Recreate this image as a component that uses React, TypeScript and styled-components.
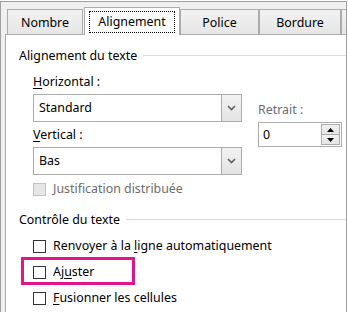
import React from "react";
import styled, { createGlobalStyle } from "styled-components";

const Global = createGlobalStyle`
  html, body { margin: 0; padding: 0; background: #ffffff; }
  body { font-family: "Noto Sans", "Open Sans", sans-serif; font-size: 12.4px; color: #000; }
  * { box-sizing: border-box; }
`;

const Frame = styled.div`
  margin-top: 1px;
  width: 347px;
  height: 311px;
  border: 1px solid #a0a0a0;
  border-bottom: none;
  background: #f0f0f0;
  display: flex;
  flex-direction: column;
  overflow: hidden;
`;

const TabStrip = styled.div`
  height: 32px;
  padding-left: 6px;
  display: flex;
  align-items: flex-end;
  flex-shrink: 0;
`;

const Tab = styled.div<{ $w: number; $active?: boolean; $gap?: number }>`
  flex-shrink: 0;
  width: ${(p) => p.$w}px;
  margin-left: ${(p) => p.$gap ?? 0}px;
  height: ${(p) => (p.$active ? 28 : 25)}px;
  margin-bottom: ${(p) => (p.$active ? -1 : 0)}px;
  position: relative;
  z-index: ${(p) => (p.$active ? 2 : 0)};
  border: 1px solid #acacac;
  border-bottom: none;
  background: ${(p) => (p.$active ? "#ffffff" : "linear-gradient(#f2f2f2, #e6e6e6)")};
  display: flex;
  justify-content: center;
  align-items: ${(p) => (p.$active ? "flex-start" : "center")};
  padding-top: ${(p) => (p.$active ? 3 : 2)}px;
  line-height: 16px;
  white-space: nowrap;
`;

const Focus = styled.div`
  width: 86px;
  height: 22px;
  border: 1px dotted #000;
  display: flex;
  align-items: center;
  justify-content: center;
  padding-bottom: 1px;
`;

const Panel = styled.div`
  flex: 1;
  background: #fff;
  border-top: 1px solid #acacac;
  border-left: 1px solid #acacac;
  margin-left: 4px;
  padding: 13px 0 0 13px;
  display: flex;
  flex-direction: column;
  position: relative;
  z-index: 1;
`;

const GroupHeader = styled.div<{ $mt: number }>`
  margin-top: ${(p) => p.$mt}px;
  height: 16px;
  line-height: 16px;
  display: flex;
  align-items: center;
  gap: 6px;
  white-space: nowrap;
  &::after {
    content: "";
    flex: 1;
    height: 1px;
    background: #dcdcdc;
    margin-top: -2px;
  }
`;

const GroupBody = styled.div`
  padding-left: 14px;
  display: flex;
  flex-direction: column;
`;

const TopGrid = styled.div`
  margin-top: 10px;
  display: grid;
  grid-template-columns: 209px 84px;
  column-gap: 16px;
`;

const Column = styled.div`
  display: flex;
  flex-direction: column;
`;

const Label = styled.div<{ $mt?: number; $disabled?: boolean }>`
  margin-top: ${(p) => p.$mt ?? 0}px;
  height: 16px;
  line-height: 16px;
  color: ${(p) => (p.$disabled ? "#6d6d6d" : "#000")};
  white-space: nowrap;
`;

const U = styled.span`
  text-decoration: underline;
  text-underline-offset: 2px;
`;

const Combo = styled.div<{ $mt: number }>`
  margin-top: ${(p) => p.$mt}px;
  height: 28px;
  border: 1px solid #acacac;
  display: flex;
  background: #fff;
`;

const ComboText = styled.div`
  flex: 1;
  padding-left: 5px;
  display: flex;
  align-items: center;
  line-height: 16px;
`;

const ComboButton = styled.div`
  width: 20px;
  border-left: 1px solid #acacac;
  background: linear-gradient(#f2f2f2, #e4e4e4);
  display: flex;
  align-items: center;
  justify-content: center;
`;

const Spin = styled.div`
  margin-top: 4px;
  height: 25px;
  border: 1px solid #acacac;
  display: flex;
  background: #fff;
`;

const SpinText = styled.div`
  flex: 1;
  padding-left: 4px;
  display: flex;
  align-items: center;
`;

const SpinButtons = styled.div`
  width: 20px;
  padding: 1px 1px 1px 0;
  display: flex;
  flex-direction: column;
`;

const SpinBtn = styled.div`
  flex: 1;
  border: 1px solid #acacac;
  background: linear-gradient(#f2f2f2, #e4e4e4);
  display: flex;
  align-items: center;
  justify-content: center;
  & + & { border-top: none; }
`;

const CheckRow = styled.div<{ $h: number; $mt?: number }>`
  position: relative;
  margin-top: ${(p) => p.$mt ?? 0}px;
  height: ${(p) => p.$h}px;
  display: flex;
  align-items: center;
  gap: 7px;
  line-height: 16px;
  white-space: nowrap;
`;

const Box = styled.div<{ $disabled?: boolean }>`
  width: 13px;
  height: 13px;
  flex-shrink: 0;
  border: 1px solid ${(p) => (p.$disabled ? "#c2c2c2" : "#333333")};
  background: ${(p) => (p.$disabled ? "#e6e6e6" : "#fff")};
`;

const Highlight = styled.div`
  position: absolute;
  left: -12px;
  top: -2px;
  width: 114px;
  height: 28px;
  border: 3px solid #e2168a;
  pointer-events: none;
`;

const Chevron = () => (
  <svg width="9" height="6" viewBox="0 0 9 6">
    <polyline points="1,1 4.5,4.5 8,1" fill="none" stroke="#606060" strokeWidth="1.6" />
  </svg>
);

const Tri = ({ up }: { up?: boolean }) => (
  <svg width="7" height="4" viewBox="0 0 7 4">
    <polygon points={up ? "0,4 7,4 3.5,0" : "0,0 7,0 3.5,4"} fill="#000" />
  </svg>
);

export default function App() {
  return (
    <>
      <Global />
      <Frame>
        <TabStrip>
          <Tab $w={76}>Nombre</Tab>
          <Tab $w={96} $active $gap={1}>
            <Focus>Alignement</Focus>
          </Tab>
          <Tab $w={79} $gap={0}>Police</Tab>
          <Tab $w={82} $gap={0}>Bordure</Tab>
          <Tab $w={80} $gap={0} />
        </TabStrip>
        <Panel>
          <GroupHeader $mt={0}>Alignement du texte</GroupHeader>
          <GroupBody>
            <TopGrid>
              <Column>
                <Label>
                  <U>H</U>orizontal :
                </Label>
                <Combo $mt={4}>
                  <ComboText>Standard</ComboText>
                  <ComboButton>
                    <Chevron />
                  </ComboButton>
                </Combo>
                <Label $mt={5}>
                  <U>V</U>ertical :
                </Label>
                <Combo $mt={4}>
                  <ComboText>Bas</ComboText>
                  <ComboButton>
                    <Chevron />
                  </ComboButton>
                </Combo>
              </Column>
              <Column>
                <Label $mt={28} $disabled>
                  Retrait :
                </Label>
                <Spin>
                  <SpinText>0</SpinText>
                  <SpinButtons>
                    <SpinBtn>
                      <Tri up />
                    </SpinBtn>
                    <SpinBtn>
                      <Tri />
                    </SpinBtn>
                  </SpinButtons>
                </Spin>
              </Column>
            </TopGrid>
            <CheckRow $h={16} $mt={6}>
              <Box $disabled />
              <Label $disabled>Justification distribuée</Label>
            </CheckRow>
          </GroupBody>
          <GroupHeader $mt={15}>Contrôle du texte</GroupHeader>
          <GroupBody>
            <CheckRow $h={26} $mt={5}>
              <Box />
              <span>
                Renvoyer à la <U>l</U>igne automatiquement
              </span>
            </CheckRow>
            <CheckRow $h={26}>
              <Highlight />
              <Box />
              <span>
                Aj<U>u</U>ster
              </span>
            </CheckRow>
            <CheckRow $h={26}>
              <Box />
              <span>
                <U>F</U>usionner les cellules
              </span>
            </CheckRow>
          </GroupBody>
        </Panel>
      </Frame>
    </>
  );
}
